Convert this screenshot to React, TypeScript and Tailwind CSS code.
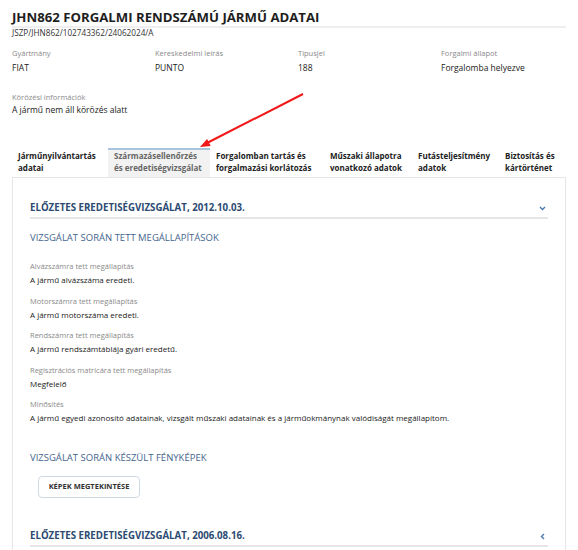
import React from 'react';

// Alapadatok a fejléc alatt
const summary = [
    { label: 'Gyártmány', value: 'FIAT' },
    { label: 'Kereskedelmi leírás', value: 'PUNTO' },
    { label: 'Típusjel', value: '188' },
    { label: 'Forgalmi állapot', value: 'Forgalomba helyezve' },
];

// Fülek: két sorban, kézzel tördelve
const tabs = [
    { lines: ['Járműnyilvántartás', 'adatai'], width: 'w-[96px]' },
    { lines: ['Származásellenőrzés', 'és eredetiségvizsgálat'], width: 'w-[102px]', active: true },
    { lines: ['Forgalomban tartás és', 'forgalmazási korlátozás'], width: 'w-[114px]' },
    { lines: ['Műszaki állapotra', 'vonatkozó adatok'], width: 'w-[88px]' },
    { lines: ['Futásteljesítmény', 'adatok'], width: 'w-[87px]' },
    { lines: ['Biztosítás és', 'kártörténet'], width: 'w-[67px]' },
];

const findings = [
    { label: 'Alvázszámra tett megállapítás', value: 'A jármű alvázszáma eredeti.' },
    { label: 'Motorszámra tett megállapítás', value: 'A jármű motorszáma eredeti.' },
    { label: 'Rendszámra tett megállapítás', value: 'A jármű rendszámtáblája gyári eredetű.' },
    { label: 'Regisztrációs matricára tett megállapítás', value: 'Megfelelő' },
    {
        label: 'Minősítés',
        value: 'A jármű egyedi azonosító adatainak, vizsgált műszaki adatainak és a járműokmánynak valódiságát megállapítom.',
    },
];

const ChevronDown = () => (
    <svg width="7" height="5" viewBox="0 0 7 5" className="mr-[2px]">
        <path d="M1 1 L3.5 3.5 L6 1" fill="none" stroke="#4a78b0" strokeWidth="1.4" />
    </svg>
);

const ChevronLeft = () => (
    <svg width="5" height="7" viewBox="0 0 5 7" className="mr-[3px]">
        <path d="M4 1 L1.5 3.5 L4 6" fill="none" stroke="#4a78b0" strokeWidth="1.4" />
    </svg>
);

const SectionHeader: React.FC<{ title: string; open?: boolean }> = ({ title, open }) => (
    <div className="flex items-center justify-between border-b-2 border-[#e6e6e6] pb-[2px] text-[9.7px] font-bold leading-[14px] text-[#2c4a72]">
        <span>{title}</span>
        {open ? <ChevronDown /> : <ChevronLeft />}
    </div>
);

export default function App() {
    return (
        <div className="relative h-[550px] w-[578px] overflow-hidden bg-white font-['Open_Sans',sans-serif] text-[#222]">
            {/* Fejléc */}
            <div className="px-[12px]">
                <h1 className="border-b-2 border-[#efefef] pt-[9px] pb-[1px] text-[13.2px] font-bold leading-[16px] text-[#1e1e1e]">
                    JHN862 FORGALMI RENDSZÁMÚ JÁRMŰ ADATAI
                </h1>
                <div className="text-[8.2px] leading-[10px] text-[#333]">JSZP/JHN862/102743362/24062024/A</div>

                <div className="mt-[10px] flex">
                    {summary.map((item) => (
                        <div key={item.label} className="w-[143px] shrink-0">
                            <div className="text-[7.5px] leading-[10px] text-[#8a8a8a]">{item.label}</div>
                            <div className="mt-[4px] text-[8.5px] leading-[12px]">{item.value}</div>
                        </div>
                    ))}
                </div>

                <div className="mt-[18px]">
                    <div className="text-[7.5px] leading-[10px] text-[#8a8a8a]">Körözési információk</div>
                    <div className="mt-[2px] text-[8.5px] leading-[12px]">A jármű nem áll körözés alatt</div>
                </div>
            </div>

            {/* Fülek */}
            <div className="mx-[12px] mt-[32px] flex h-[29px]">
                {tabs.map((tab) => (
                    <div
                        key={tab.lines[0]}
                        className={`${tab.width} shrink-0 whitespace-nowrap px-[6px] text-[8px] font-bold leading-[12px] ${
                            tab.active ? 'border-t-2 border-[#a9c4df] bg-[#f2f2f2] pt-0 text-[#666]' : 'pt-[2px] text-[#222]'
                        }`}
                    >
                        {tab.lines[0]}
                        <br />
                        {tab.lines[1]}
                    </div>
                ))}
            </div>

            {/* Tartalom */}
            <div className="mx-[12px] h-[400px] border border-[#e6e6e6] px-[17px] pt-[23px]">
                <SectionHeader title="ELŐZETES EREDETISÉGVIZSGÁLAT, 2012.10.03." open />

                <div className="mt-[12px] text-[9.5px] leading-[14px] text-[#45648d]">VIZSGÁLAT SORÁN TETT MEGÁLLAPÍTÁSOK</div>

                <div className="mt-[15px] flex flex-col gap-[7.5px]">
                    {findings.map((f) => (
                        <div key={f.label}>
                            <div className="text-[7.5px] leading-[12px] text-[#8a8a8a]">{f.label}</div>
                            <div className="mt-[1px] text-[8px] leading-[14px] text-[#1a1a1a]">{f.value}</div>
                        </div>
                    ))}
                </div>

                <div className="mt-[26px] text-[9.5px] leading-[14px] text-[#45648d]">VIZSGÁLAT SORÁN KÉSZÜLT FÉNYKÉPEK</div>

                <button className="mt-[11px] ml-[8px] flex h-[22px] w-[102px] items-center justify-center rounded-[4px] border border-[#cfd8e3] bg-white text-[7.5px] font-bold text-[#333]">
                    KÉPEK MEGTEKINTÉSE
                </button>

                <div className="mt-[31px]">
                    <SectionHeader title="ELŐZETES EREDETISÉGVIZSGÁLAT, 2006.08.16." />
                </div>
            </div>

            {/* Piros nyíl a kiemelt fülre */}
            <svg className="pointer-events-none absolute left-0 top-0" width="578" height="550">
                <line x1="303" y1="94" x2="207" y2="143" stroke="#f01818" strokeWidth="2" />
                <polygon points="200,147 210.7,146 207.1,138.9" fill="#f01818" />
            </svg>
        </div>
    );
}
